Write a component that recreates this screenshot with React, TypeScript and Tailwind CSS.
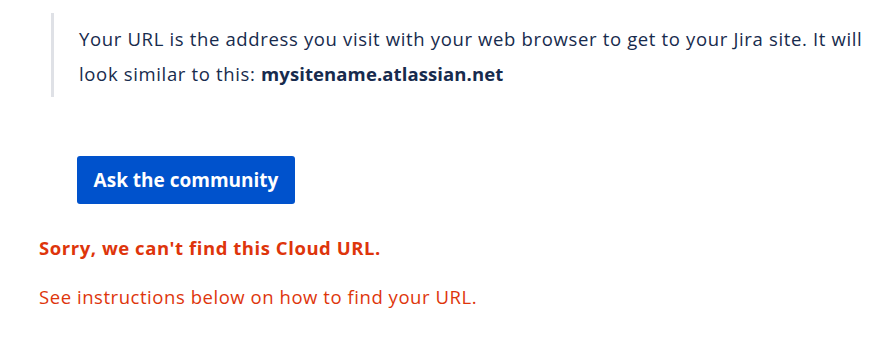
import React from "react";

export default function App() {
  const font = { fontFamily: '"Open Sans", "Noto Sans", sans-serif' };
  return (
    <div className="w-[880px] h-[348px] bg-white overflow-hidden" style={font}>
      <div className="pt-[13px] pl-[51px]">
        <div className="border-l-[3px] border-[#dfe1e6] pl-[25px] pt-[8px] pb-[6px] w-[825px]">
          <p className="text-[18.5px] leading-[35px] tracking-[0.65px] text-[#172b4d]">
            Your URL is the address you visit with your web browser to get to your Jira site. It will look similar to this:{" "}
            <strong className="font-bold tracking-[0.1px]">mysitename.atlassian.net</strong>
          </p>
        </div>
      </div>
      <div className="pl-[77px] mt-[59px]">
        <button className="h-[48px] w-[218px] rounded-[3px] bg-[#0052cc] text-white text-[19px] font-bold pt-[1px]">
          Ask the community
        </button>
      </div>
      <div className="pl-[39px] mt-[30px] text-[#de350b]">
        <p className="text-[18.5px] tracking-[0.55px] font-bold leading-[28px]">Sorry, we can't find this Cloud URL.</p>
        <p className="text-[18.5px] tracking-[0.55px] leading-[28px] mt-[21px]">See instructions below on how to find your URL.</p>
      </div>
    </div>
  );
}
